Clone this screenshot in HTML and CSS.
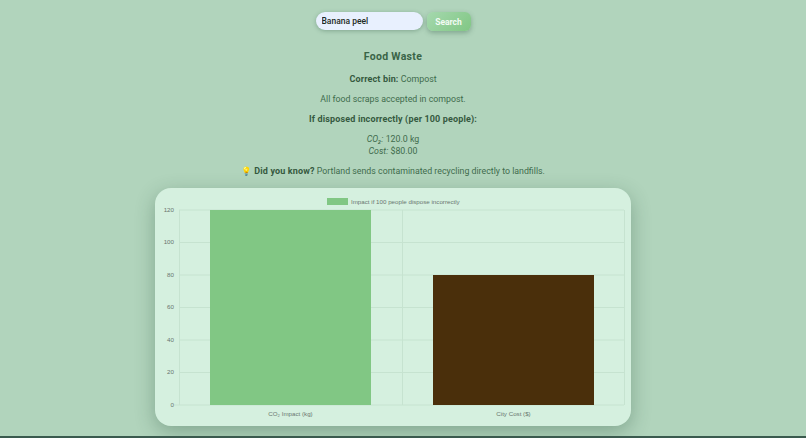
FILE: index.html
```html
<!DOCTYPE html>
<html lang="en">
<head>
<meta charset="utf-8">
<title>Food Waste</title>
<link rel="stylesheet" href="styles.css">
</head>
<body>
<main class="page">
  <form class="search">
    <input class="search-input" type="text" value="Banana peel">
    <button class="search-btn" type="button">Search</button>
  </form>
  <h2 class="title">Food Waste</h2>
  <p class="line"><strong>Correct bin:</strong> Compost</p>
  <p class="line">All food scraps accepted in compost.</p>
  <p class="line"><strong>If disposed incorrectly (per 100 people):</strong></p>
  <p class="line stats"><em>CO₂:</em> 120.0 kg<br><em>Cost:</em> $80.00</p>
  <p class="line"><span class="bulb">💡</span> <strong>Did you know?</strong> Portland sends contaminated recycling directly to landfills.</p>
  <section class="card">
    <svg class="chart" width="476" height="238" viewBox="0 0 476 238">
      <g class="grid">
        <line x1="24" y1="22" x2="469" y2="22"/>
        <line x1="24" y1="54.5" x2="469" y2="54.5"/>
        <line x1="24" y1="87" x2="469" y2="87"/>
        <line x1="24" y1="119.5" x2="469" y2="119.5"/>
        <line x1="24" y1="152" x2="469" y2="152"/>
        <line x1="24" y1="184.5" x2="469" y2="184.5"/>
        <line x1="19" y1="217" x2="469" y2="217"/>
        <line x1="24.5" y1="22" x2="24.5" y2="217"/>
        <line x1="247.5" y1="22" x2="247.5" y2="217"/>
        <line x1="469.5" y1="22" x2="469.5" y2="217"/>
      </g>
      <rect class="bar-green" x="55" y="22" width="161" height="195"/>
      <rect class="bar-brown" x="278" y="87" width="161" height="130"/>
      <rect class="bar-green" x="172" y="10" width="21" height="7"/>
      <text class="label" x="196" y="15.500">Impact if 100 people dispose incorrectly</text>
      <g class="tick">
        <text x="19" y="23.500">120</text>
        <text x="19" y="56">100</text>
        <text x="19" y="88.500">80</text>
        <text x="19" y="121">60</text>
        <text x="19" y="153.500">40</text>
        <text x="19" y="186">20</text>
        <text x="19" y="218.500">0</text>
      </g>
      <text class="label mid" x="135.500" y="228">CO₂ Impact (kg)</text>
      <text class="label mid" x="358.500" y="228">City Cost ($)</text>
    </svg>
  </section>
</main>
</body>
</html>
```
FILE: styles.css
```css
html, body {
  margin: 0;
  height: 438px;
  overflow: hidden;
}
body {
  background: #b1d4bc;
  border-bottom: 2px solid #3a5a4e;
  box-sizing: border-box;
  font-family: "Roboto", "Noto Sans", sans-serif;
  color: #3f6b4c;
}
.page {
  width: 786px;
  display: flex;
  flex-direction: column;
  align-items: center;
  padding-top: 12px;
  box-sizing: border-box;
}
.search {
  display: flex;
  align-items: flex-start;
  gap: 4px;
  margin: 0 0 19px;
}
.search-input {
  width: 107px;
  height: 18px;
  box-sizing: border-box;
  border: 0;
  border-radius: 9px;
  padding: 0 6px;
  background: #e8f0fe;
  color: #1d2b24;
  font: 500 8.500px "Roboto", sans-serif;
  box-shadow: 0 1px 4px rgba(40, 80, 60, .35);
  outline: 0;
}
.search-btn {
  width: 44px;
  height: 19px;
  padding: 0;
  border: 0;
  border-radius: 6px;
  background: linear-gradient(135deg, #a5d8ae, #81c784);
  color: #f2fbf4;
  font: 700 8.500px "Roboto", sans-serif;
  box-shadow: 0 2px 5px rgba(40, 80, 60, .35);
}
.title {
  margin: 0 0 9px;
  font-size: 10.500px;
  line-height: 14px;
  font-weight: 700;
  letter-spacing: .3px;
  color: #3a6447;
}
.line {
  margin: 0 0 7.500px;
  font-size: 8.800px;
  line-height: 12.500px;
  text-align: center;
}
.line strong {
  color: #35593f;
  font-size: 9px;
  letter-spacing: .15px;
}
.stats { line-height: 12px; }
.bulb { font-size: 8.500px; }
.card {
  width: 476px;
  height: 238px;
  margin-top: 3.500px;
  border-radius: 16px;
  background: #d5f0df;
  box-shadow: 0 6px 20px rgba(30, 70, 50, .32);
  overflow: hidden;
}
.chart { display: block; }
.grid line { stroke: #c6e3d0; stroke-width: 1; }
.bar-green { fill: #81c784; }
.bar-brown { fill: #4a2f0b; }
.label, .tick text {
  font: 6.200px "Liberation Sans", sans-serif;
  fill: #6a766f;
}
.tick text { text-anchor: end; }
.mid { text-anchor: middle; }
```
